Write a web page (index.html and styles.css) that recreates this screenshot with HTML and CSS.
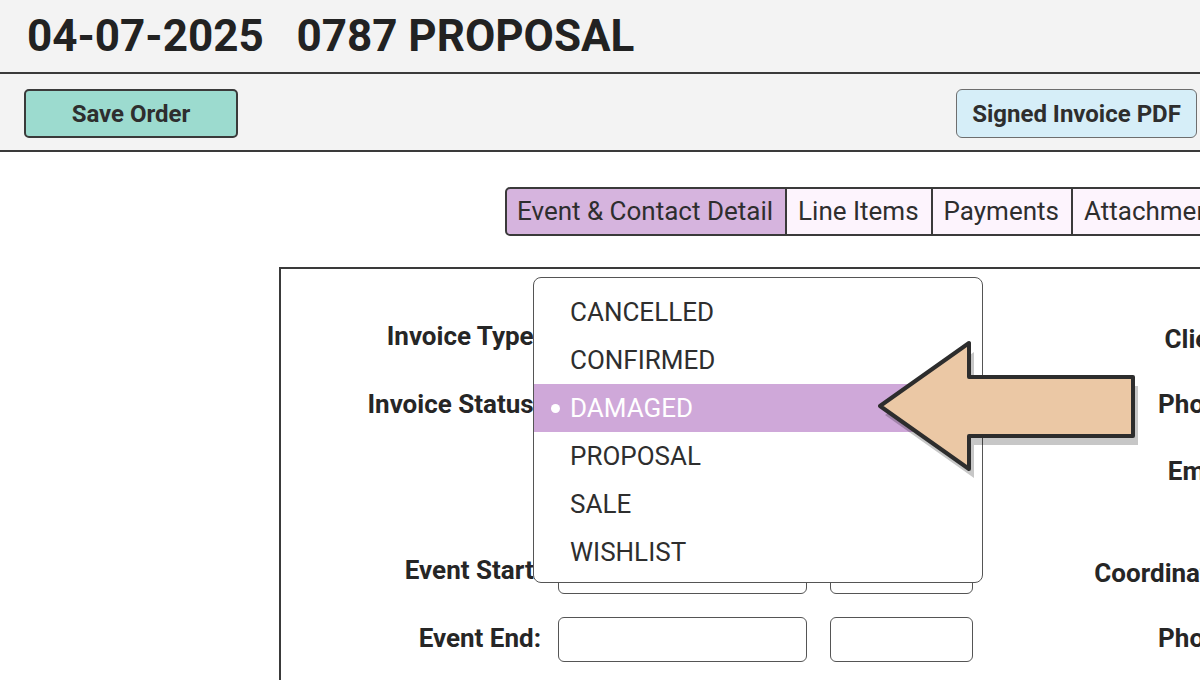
FILE: index.html
```html
<!DOCTYPE html>
<html lang="en">
<head>
<meta charset="utf-8">
<title>0787 PROPOSAL</title>
<link rel="stylesheet" href="styles.css">
</head>
<body>
<div class="page">
  <header class="titlebar">
    <h1 class="title">04-07-2025   0787 PROPOSAL</h1>
  </header>
  <div class="toolbar">
    <button class="btn btn-save">Save Order</button>
    <button class="btn btn-pdf">Signed Invoice PDF</button>
  </div>
  <main class="content">
    <nav class="tabs">
      <span class="tab tab-active">Event &amp; Contact Detail</span>
      <span class="tab">Line Items</span>
      <span class="tab">Payments</span>
      <span class="tab">Attachments</span>
    </nav>
    <section class="panel">
      <div class="form-grid">
        <label class="lbl">Invoice Type:</label>
        <div class="field field-wide"></div>
        <label class="rlbl rlbl-low">Client:</label>

        <label class="lbl">Invoice Status:</label>
        <div class="field field-wide"></div>
        <label class="rlbl">Phone:</label>

        <span class="lbl"></span>
        <span class="spacer"></span>
        <label class="rlbl rlbl-top">Email:</label>

        <label class="lbl">Event Start:</label>
        <div class="field"></div>
        <div class="field field-short"></div>
        <label class="rlbl rlbl-low">Coordinator:</label>

        <label class="lbl">Event End:</label>
        <div class="field"></div>
        <div class="field field-short"></div>
        <label class="rlbl">Phone:</label>
      </div>
    </section>
  </main>

  <ul class="dropdown">
    <li class="opt">CANCELLED</li>
    <li class="opt">CONFIRMED</li>
    <li class="opt opt-selected">DAMAGED</li>
    <li class="opt">PROPOSAL</li>
    <li class="opt">SALE</li>
    <li class="opt">WISHLIST</li>
  </ul>

  <svg class="arrow" width="280" height="150" viewBox="0 0 280 150" aria-hidden="true">
    <polygon class="arrow-shadow" points="15,82 104,19 104,53 268,53 268,112 104,112 104,145"/>
    <polygon class="arrow-body" points="10,73 99,10 99,44 263,44 263,103 99,103 99,136"/>
  </svg>
</div>
</body>
</html>
```
FILE: styles.css
```css
html, body {
  margin: 0;
  padding: 0;
  overflow: hidden;
  background: #ffffff;
}

body {
  font-family: Roboto, "Noto Sans", "Liberation Sans", sans-serif;
  color: #2a2a2a;
}

.page {
  position: relative;
  width: 1200px;
  height: 680px;
  overflow: hidden;
}

.titlebar {
  height: 72px;
  background: #f3f3f3;
  border-bottom: 2px solid #3a3a3a;
}

.title {
  margin: 0;
  padding-left: 27px;
  font-size: 44px;
  font-weight: 700;
  line-height: 72px;
  white-space: pre;
  color: #222;
}

.toolbar {
  height: 78px;
  box-sizing: border-box;
  padding: 15px 3px 0 24px;
  background: #f3f3f3;
  border-bottom: 2px solid #3a3a3a;
  display: flex;
  justify-content: space-between;
  align-items: flex-start;
}

.btn {
  height: 49px;
  font-family: inherit;
  font-size: 24px;
  font-weight: 700;
  color: #2e2e2e;
  cursor: pointer;
}

.btn-save {
  width: 214px;
  background: #9cdbcf;
  border: 2px solid #3a3a3a;
  border-radius: 5px;
}

.btn-pdf {
  width: 241px;
  background: #d6eef8;
  border: 1.5px solid #6e6e6e;
  border-radius: 6px;
}

.content {
  padding-top: 35px;
}

.tabs {
  display: flex;
  margin-left: 505px;
  white-space: nowrap;
}

.tab {
  height: 49px;
  box-sizing: border-box;
  display: flex;
  align-items: center;
  padding: 0 12px 1px 11px;
  font-size: 26px;
  color: #2e2e2e;
  background: #fdf4fd;
  border: 2px solid #3a3a3a;
  border-left: none;
}

.tab-active {
  background: #d6b4de;
  border-left: 2px solid #3a3a3a;
  border-radius: 5px 0 0 5px;
  padding-left: 10px;
}

.panel {
  margin: 31px 0 0 279px;
  width: 1100px;
  height: 500px;
  border: 2px solid #3a3a3a;
  box-sizing: border-box;
  padding-top: 46px;
}

.form-grid {
  display: grid;
  grid-template-columns: 277px 272px 143px 267px;
  grid-template-rows: 45px 45px 75px 45px 45px;
  row-gap: 23px;
}

.lbl {
  grid-column: 1;
  align-self: center;
  text-align: right;
  padding-right: 17px;
  padding-bottom: 4px;
  font-size: 26px;
  font-weight: 700;
  color: #262626;
}

.field {
  width: 249px;
  height: 45px;
  box-sizing: border-box;
  border: 1.5px solid #555;
  border-radius: 6px;
  background: #fff;
}

.field-short {
  width: 143px;
}

.field-wide {
  grid-column: 2 / 4;
  width: 415px;
}

.spacer {
  grid-column: 2 / 4;
}

.rlbl {
  grid-column: 4;
  align-self: center;
  text-align: right;
  padding-bottom: 4px;
  font-size: 26px;
  font-weight: 700;
  color: #262626;
}

.rlbl-low {
  padding-top: 6px;
}

.rlbl-top {
  align-self: start;
  padding-top: 5px;
  padding-bottom: 0;
}

/* open status menu overlay */
.dropdown {
  position: absolute;
  left: 533px;
  top: 277px;
  width: 450px;
  height: 306px;
  box-sizing: border-box;
  margin: 0;
  padding: 10px 0 0 0;
  list-style: none;
  background: #fff;
  border: 1.5px solid #555;
  border-radius: 8px;
}

.opt {
  height: 48px;
  display: flex;
  align-items: center;
  padding-left: 36px;
  font-size: 26px;
  color: #2e2e2e;
}

.opt-selected {
  background: #cfa8d9;
  color: #ffffff;
}

.opt-selected::before {
  content: "";
  width: 9px;
  height: 9px;
  border-radius: 50%;
  background: #ffffff;
  margin-left: -19px;
  margin-right: 10px;
}

/* annotation arrow overlay */
.arrow {
  position: absolute;
  left: 870px;
  top: 333px;
}

.arrow-shadow {
  fill: rgba(0, 0, 0, 0.22);
  stroke: none;
}

.arrow-body {
  fill: #ebc8a5;
  stroke: #2d2d2d;
  stroke-width: 4;
  stroke-linejoin: round;
}
```
